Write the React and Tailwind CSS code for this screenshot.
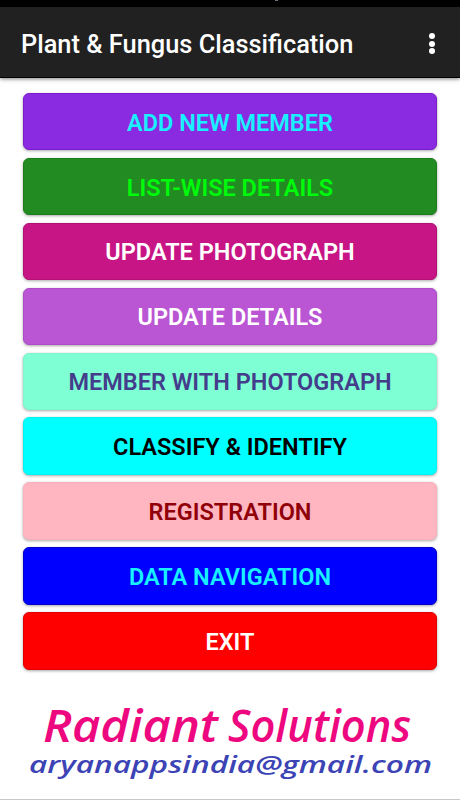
import React from "react";

const menuItems = [
  { label: "ADD NEW MEMBER", style: "bg-[#8a2be2] text-[#18f0ff] border-[#7a1ccb]" },
  { label: "LIST-WISE DETAILS", style: "bg-[#228b22] text-[#00fa0c] border-[#1b7e1b]" },
  { label: "UPDATE PHOTOGRAPH", style: "bg-[#c71585] text-white border-[#b31075]" },
  { label: "UPDATE DETAILS", style: "bg-[#ba55d3] text-white border-[#ae4cc7]" },
  { label: "MEMBER WITH PHOTOGRAPH", style: "bg-[#7fffd4] text-[#433d8b] border-[#7df6ce]" },
  { label: "CLASSIFY & IDENTIFY", style: "bg-[#00ffff] text-black border-[#00f3f3]" },
  { label: "REGISTRATION", style: "bg-[#ffb6c1] text-[#900008] border-[#f9b2bd]" },
  { label: "DATA NAVIGATION", style: "bg-[#0000ff] text-[#18f0ff] border-[#0000d0]" },
  { label: "EXIT", style: "bg-[#ff0000] text-white border-[#e00000]" },
];

const Header = () => (
  <>
    <div className="h-[7px] shrink-0 bg-black overflow-hidden flex justify-center pl-[92px]">
      <div className="w-[3px] h-px bg-gray-500" />
    </div>
    <header className="h-[71px] shrink-0 bg-[#212121] border-b border-black shadow-[0_1px_4px_rgba(0,0,0,0.5)] flex items-center justify-between pt-[3px] pl-[21px] pr-[25px]">
      <h1 className="text-[25.4px] leading-8 font-medium text-white whitespace-nowrap">
        Plant & Fungus Classification
      </h1>
      <button aria-label="More options" className="flex flex-col gap-[1.8px]">
        <span className="size-[6px] rounded-full bg-white" />
        <span className="size-[6px] rounded-full bg-white" />
        <span className="size-[6px] rounded-full bg-white" />
      </button>
    </header>
  </>
);

const Footer = () => (
  <svg viewBox="0 0 460 110" className="w-full h-[110px] mt-auto shrink-0">
    <g fontFamily="'Open Sans', sans-serif" fontStyle="italic">
      <g fontSize="46" fontWeight="600" fill="#ed087f">
        <text x="43" y="53" textLength="175" lengthAdjust="spacingAndGlyphs">
          Radiant
        </text>
        <text x="228" y="53" textLength="183" lengthAdjust="spacingAndGlyphs">
          Solutions
        </text>
      </g>
      <text x="29" y="84" fontSize="24" fontWeight="600" fill="#3b43b5" textLength="403" lengthAdjust="spacingAndGlyphs">
        aryanappsindia@gmail.com
      </text>
    </g>
  </svg>
);

export default function App() {
  return (
    <div className="h-screen w-full bg-white overflow-hidden flex flex-col font-['Roboto',sans-serif] border-b border-[#c8c8c8]">
      <Header />
      <main className="flex flex-col gap-[7.5px] pt-[15px] px-[23px]">
        {menuItems.map((item) => (
          <button
            key={item.label}
            className={`h-[57.4px] shrink-0 rounded-[6px] border shadow-[0_1px_3px_rgba(0,0,0,0.35)] flex items-center justify-center pt-[2px] text-[23.5px] leading-7 font-semibold whitespace-nowrap ${item.style}`}
          >
            {item.label}
          </button>
        ))}
      </main>
      <Footer />
    </div>
  );
}
